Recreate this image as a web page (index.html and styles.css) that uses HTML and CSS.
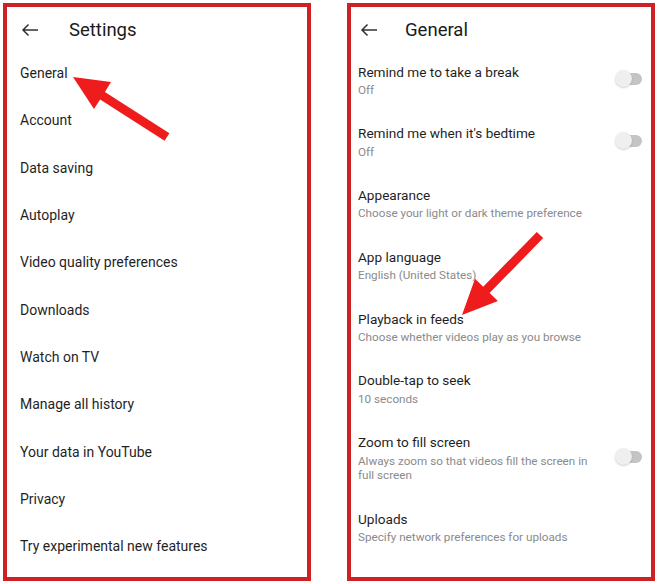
FILE: index.html
```html
<!DOCTYPE html>
<html lang="en">
<head>
<meta charset="utf-8">
<title>Settings</title>
<link rel="stylesheet" href="styles.css">
</head>
<body>
<div class="page">
  <section class="panel">
    <header class="bar">
      <svg class="back" viewBox="0 0 18 14" width="18" height="14"><path d="M17 7H2M7.5 1.5L2 7l5.5 5.5" fill="none" stroke="#333" stroke-width="1.5"/></svg>
      <h1 class="title">Settings</h1>
    </header>
    <ul class="menu">
      <li>General</li>
      <li>Account</li>
      <li>Data saving</li>
      <li>Autoplay</li>
      <li>Video quality preferences</li>
      <li>Downloads</li>
      <li>Watch on TV</li>
      <li>Manage all history</li>
      <li>Your data in YouTube</li>
      <li>Privacy</li>
      <li>Try experimental new features</li>
    </ul>
  </section>
  <section class="panel">
    <header class="bar bar-general">
      <svg class="back" viewBox="0 0 18 14" width="18" height="14"><path d="M17 7H2M7.5 1.5L2 7l5.5 5.5" fill="none" stroke="#333" stroke-width="1.5"/></svg>
      <h1 class="title">General</h1>
    </header>
    <ul class="opts">
      <li class="opt"><div class="txt"><div class="name">Remind me to take a break</div><div class="sub">Off</div></div><span class="toggle"></span></li>
      <li class="opt"><div class="txt"><div class="name">Remind me when it's bedtime</div><div class="sub">Off</div></div><span class="toggle"></span></li>
      <li class="opt"><div class="txt"><div class="name">Appearance</div><div class="sub">Choose your light or dark theme preference</div></div></li>
      <li class="opt"><div class="txt"><div class="name">App language</div><div class="sub">English (United States)</div></div></li>
      <li class="opt"><div class="txt"><div class="name">Playback in feeds</div><div class="sub">Choose whether videos play as you browse</div></div></li>
      <li class="opt"><div class="txt"><div class="name">Double-tap to seek</div><div class="sub">10 seconds</div></div></li>
      <li class="opt"><div class="txt narrow"><div class="name">Zoom to fill screen</div><div class="sub">Always zoom so that videos fill the screen in full screen</div></div><span class="toggle"></span></li>
      <li class="opt"><div class="txt"><div class="name">Uploads</div><div class="sub">Specify network preferences for uploads</div></div></li>
    </ul>
  </section>
  <svg class="arrows" viewBox="0 0 658 584" width="658" height="584">
    <polygon fill="#ee1c1c" points="73,77 111,82 104.9,92 169.4,133.2 164.6,140.8 100.1,99.6 94,109"/>
    <polygon fill="#ee1c1c" points="462,315 475,278.7 483.2,286.8 536.8,231.9 543.2,238.1 489.6,293 497.9,301.1"/>
  </svg>
</div>
</body>
</html>
```
FILE: styles.css
```css
* { box-sizing: border-box; }
html, body { margin: 0; padding: 0; background: #fff; }
body { font-family: Roboto, "Noto Sans", sans-serif; color: #1f1f1f; }
.page {
  position: relative;
  width: 658px;
  height: 584px;
  padding: 3px;
  display: flex;
  gap: 36px;
}
.panel {
  width: 308px;
  height: 578px;
  border: 4px solid #cf2026;
  display: flex;
  flex-direction: column;
}
.bar {
  height: 42.5px;
  display: flex;
  align-items: center;
  padding-left: 14px;
  padding-top: 3px;
  gap: 30px;
  flex: none;
}
.bar-general { padding-left: 9px; gap: 27px; }
.back { display: block; }
.title {
  margin: 0;
  font-size: 18.5px;
  font-weight: 400;
  color: #1a1a1a;
}
.menu, .opts { list-style: none; margin: 0; padding: 0; }
.menu li {
  height: 47.3px;
  display: flex;
  align-items: center;
  padding-left: 13px;
  font-size: 14px;
}
.opt {
  display: flex;
  align-items: center;
  padding: 14px 9px 14px 7px;
}
.txt { flex: 1; min-width: 0; }
.txt.narrow { flex: none; width: 240px; }
.narrow + .toggle { margin-left: auto; }
.name { font-size: 13.6px; line-height: 17px; }
.sub {
  font-size: 11.7px;
  line-height: 14.5px;
  margin-top: 2.3px;
  color: #8a8a8a;
}
.toggle {
  position: relative;
  flex: none;
  width: 26px;
  height: 12px;
  border-radius: 6px;
  background: #c4c4c4;
  margin-top: -2px;
}
.toggle::before {
  content: "";
  position: absolute;
  left: -1px;
  top: -3px;
  width: 17px;
  height: 17px;
  border-radius: 50%;
  background: #efefef;
  box-shadow: 0 1px 2px rgba(0,0,0,0.18);
}
.arrows {
  position: absolute;
  left: 0;
  top: 0;
  pointer-events: none;
}
```
